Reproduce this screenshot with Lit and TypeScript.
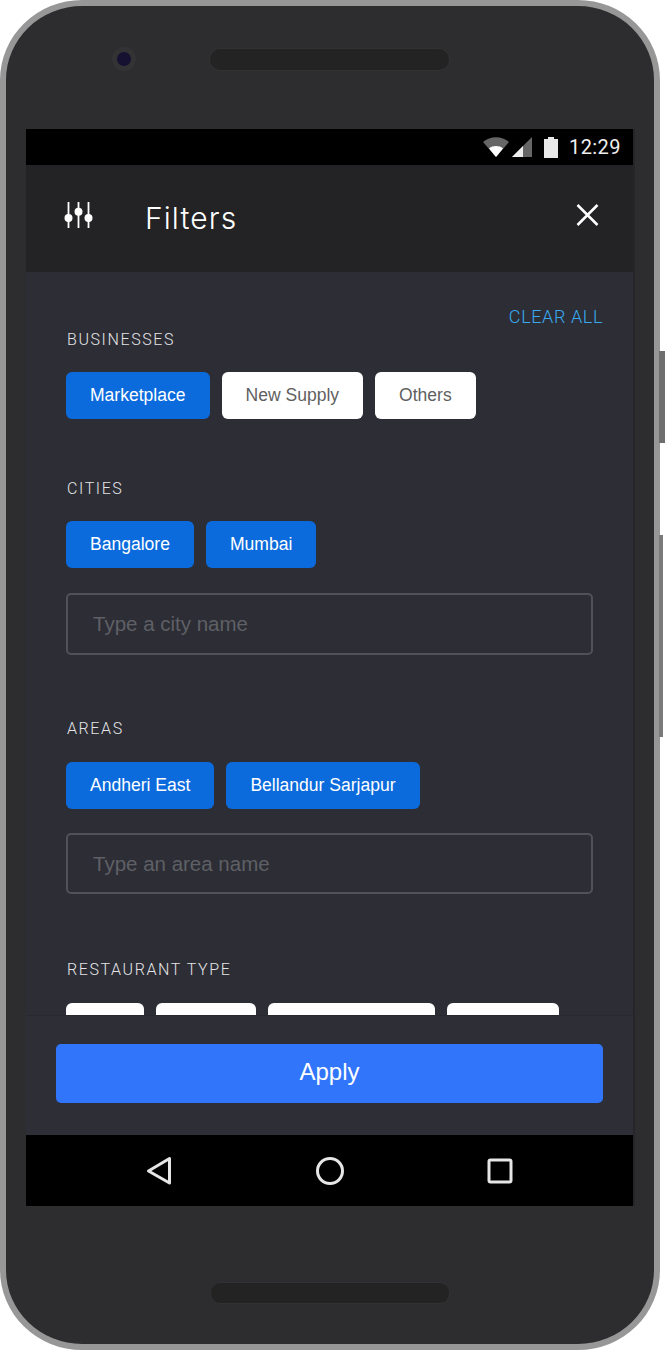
import { LitElement, html, css, svg } from "lit";
import { customElement } from "lit/decorators.js";

@customElement("app-root")
export class AppRoot extends LitElement {
  static styles = css`
    :host { display: block; width: 665px; height: 1350px; background: #fff; font-family: "Liberation Sans", Arial, sans-serif; overflow: hidden; }
    .device { position: relative; width: 665px; height: 1350px; }
    .side { position: absolute; left: 659px; background: #6f6e6f; }
    .s1 { top: 351px; height: 92px; width: 6px; }
    .s2 { top: 535px; height: 202px; width: 4px; background: #7b7a7b; }
    .phone { box-sizing: border-box; width: 660px; height: 1350px; background: #2d2c2e; border: 6px solid #979797; border-radius: 82px / 80px; display: flex; flex-direction: column; align-items: center; }
    .top { height: 123px; width: 100%; flex: none; position: relative; }
    .cam { position: absolute; left: 106px; top: 41px; width: 24px; height: 24px; box-sizing: border-box; border-radius: 50%; background: #161130; border: 5px solid #333235; }
    .spk { position: absolute; left: 204px; top: 43px; width: 239px; height: 21px; border-radius: 10px; background: #232323; box-shadow: 0 0 0 1px #323133; }
    .screen { width: 607px; flex: none; display: flex; flex-direction: column; height: 1077px; align-self: flex-start; margin-left: 20px; box-shadow: 2px 0 0 #262527; }
    .status { height: 36px; background: #000; display: flex; align-items: center; justify-content: flex-end; padding-right: 12px; flex: none; }
    .status svg { display: block; }
    .battery { margin-left: 12px; }
    .time { color: #efefef; font: 400 20px Roboto, sans-serif; margin-left: 11px; letter-spacing: 0.45px; }
    .head { height: 107px; background: #232325; display: flex; align-items: center; flex: none; padding: 0 34px 0 38px; }
    .sliders { margin-bottom: 5px; flex: none; }
    .title { color: #fff; font: 300 30px Inter, sans-serif; letter-spacing: 1.1px; margin-left: 51px; flex: 1; position: relative; top: -1px; }
    .close { position: relative; top: -4px; }
    .body { height: 743px; flex: none; overflow: hidden; background: #2c2d35; box-sizing: border-box; padding: 33px 30px 0 40px; }
    .clear { color: #3aaaf0; font: 300 18px Roboto, sans-serif; text-align: right; letter-spacing: 0.6px; line-height: 24px; height: 22px; margin-bottom: 2px; }
    .sec.biz { margin-bottom: 59px; }
    .sec.city { margin-bottom: 63px; }
    .sec.area { margin-bottom: 65px; }
    .lab { color: #e4e4e6; font: 300 16px Roboto, sans-serif; letter-spacing: 1.6px; line-height: 22px; height: 20px; padding-left: 1px; }
    .chips { display: flex; gap: 12px; margin-top: 23px; }
    .area .chips, .rest .chips { margin-top: 24px; }
    .chip { height: 47px; box-sizing: border-box; border-radius: 6px; padding: 0 24px; display: flex; align-items: center; font-size: 17.54px; white-space: nowrap; flex: none; }
    .on { background: #0b6bdc; color: #fff; }
    .off { background: #fff; color: #5f5f5f; }
    .input { box-sizing: border-box; height: 62px; width: 527px; margin-top: 25px; border: 2px solid #515257; border-radius: 5px; display: flex; align-items: center; padding-left: 25px; color: #5f6065; font-size: 20.5px; }
    .area .input { margin-top: 24px; height: 61px; }
    .foot { height: 120px; flex: none; background: #2d2e36; box-sizing: border-box; border-top: 1px solid #28282e; padding: 28px 30px 0 30px; }
    .apply { height: 59px; box-sizing: border-box; padding-bottom: 3px; background: #3075fa; color: #fff; border-radius: 5px; display: flex; align-items: center; justify-content: center; font-size: 24px; }
    .nav { height: 71px; flex: none; box-sizing: border-box; padding: 1px 0 0 120px; background: #000; display: flex; align-items: center; }
    .nav svg { display: block; flex: none; }
    .nav svg + svg { margin-left: 144px; }
    .nav svg:last-child { margin-left: 143px; }
    .bottom { flex: 1; width: 100%; position: relative; }
    .spk2 { position: absolute; left: 205px; top: 77px; width: 238px; height: 20px; border-radius: 9px; background: #232323; box-shadow: 0 0 0 1px #323133; }
  `;

  private sliders() {
    return svg`<svg class="sliders" width="30" height="30" viewBox="0 0 30 30" fill="none" stroke="#fff">
      <path d="M4.500 1v26M14.500 1v26M24.500 1v26" stroke-width="1.800"/>
      <circle cx="4.500" cy="17" r="4" fill="#fff" stroke="none"/>
      <circle cx="14.500" cy="10.700" r="4" fill="#fff" stroke="none"/>
      <circle cx="24.500" cy="17" r="4" fill="#fff" stroke="none"/>
    </svg>`;
  }

  render() {
    const rest = [78, 100, 167, 112];
    return html`
      <div class="device">
        <div class="side s1"></div>
        <div class="side s2"></div>
        <div class="phone">
          <div class="top"><div class="cam"></div><div class="spk"></div></div>
          <div class="screen">
            <div class="status">
              <svg width="49" height="20" viewBox="0 0 49 20">
                <path d="M0 5C7 -1.500 19 -1.500 26 5L13 20Z" fill="#666"/>
                <path d="M6 11.500C10 8.300 16 8.300 20 11.500L13 20Z" fill="#fff"/>
                <path d="M49 0V20H29Z" fill="#666"/>
                <path d="M40 9V20H29Z" fill="#eee"/>
              </svg>
              <svg class="battery" width="14" height="21" viewBox="0 0 14 21">
                <path d="M4 0h6v2h4v19H0V2h4Z" fill="#e8e8e8"/>
              </svg>
              <span class="time">12:29</span>
            </div>
            <div class="head">
              ${this.sliders()}
              <div class="title">Filters</div>
              <svg class="close" width="23" height="24" viewBox="0 0 23 24" fill="none" stroke="#fff" stroke-width="2.500"><path d="M1.500 2l20 20M21.500 2l-20 20"/></svg>
            </div>
            <div class="body">
              <div class="clear">CLEAR ALL</div>
              <div class="sec biz">
                <div class="lab">BUSINESSES</div>
                <div class="chips">
                  <div class="chip on">Marketplace</div>
                  <div class="chip off">New Supply</div>
                  <div class="chip off">Others</div>
                </div>
              </div>
              <div class="sec city">
                <div class="lab">CITIES</div>
                <div class="chips">
                  <div class="chip on">Bangalore</div>
                  <div class="chip on">Mumbai</div>
                </div>
                <div class="input">Type a city name</div>
              </div>
              <div class="sec area">
                <div class="lab">AREAS</div>
                <div class="chips">
                  <div class="chip on">Andheri East</div>
                  <div class="chip on">Bellandur Sarjapur</div>
                </div>
                <div class="input">Type an area name</div>
              </div>
              <div class="sec rest">
                <div class="lab">RESTAURANT TYPE</div>
                <div class="chips">
                  ${rest.map((w) => html`<div class="chip off" style="width:${w}px"></div>`)}
                </div>
              </div>
            </div>
            <div class="foot"><div class="apply">Apply</div></div>
            <div class="nav">
              <svg width="26" height="30" viewBox="0 0 26 30" fill="none" stroke="#e6e6e6" stroke-width="3" stroke-linejoin="round"><path d="M23.500 2.500V27L2.500 15Z"/></svg>
              <svg width="28" height="28" viewBox="0 0 28 28" fill="none" stroke="#e6e6e6" stroke-width="3"><circle cx="14" cy="14" r="12.500"/></svg>
              <svg width="26" height="26" viewBox="0 0 26 26" fill="none" stroke="#e6e6e6" stroke-width="3" stroke-linejoin="round"><rect x="2" y="2" width="22" height="22" rx="1.500"/></svg>
            </div>
          </div>
          <div class="bottom"><div class="spk2"></div></div>
        </div>
      </div>
    `;
  }
}
